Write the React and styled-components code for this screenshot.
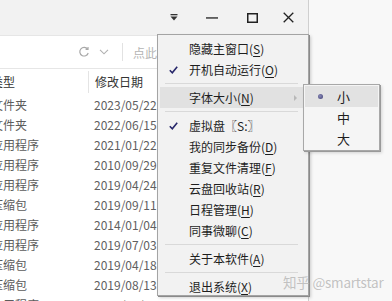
import React from 'react';
import styled, { createGlobalStyle } from 'styled-components';

const GlobalStyle = createGlobalStyle`
  html, body {
    margin: 0;
    padding: 0;
    background: #f8f8f8;
  }
  body {
    font-family: "Noto Sans CJK SC", "Liberation Sans", sans-serif;
  }
`;

const rows = [
  { type: '文件夹', date: '2023/05/22 09:12' },
  { type: '文件夹', date: '2022/06/15 17:40' },
  { type: '应用程序', date: '2021/01/22 11:05' },
  { type: '应用程序', date: '2010/09/29 08:30' },
  { type: '应用程序', date: '2019/04/24 14:22' },
  { type: '压缩包', date: '2019/09/11 10:01' },
  { type: '应用程序', date: '2014/01/04 16:45' },
  { type: '应用程序', date: '2019/07/03 09:58' },
  { type: '压缩包', date: '2019/04/18 13:36' },
  { type: '压缩包', date: '2019/08/13 15:20' },
  { type: '应用程序', date: '2022/01/20 10:58:00', size: '10.58 MB' },
];

const menuItems = [
  { label: '隐藏主窗口', key: 'S' },
  { label: '开机自动运行', key: 'O', checked: true },
  { sep: true },
  { label: '字体大小', key: 'N', sub: true, active: true },
  { sep: true },
  { label: '虚拟盘〖S:〗', checked: true },
  { label: '我的同步备份', key: 'D' },
  { label: '重复文件清理', key: 'F' },
  { label: '云盘回收站', key: 'R' },
  { label: '日程管理', key: 'H' },
  { label: '同事微聊', key: 'C' },
  { sep: true },
  { label: '关于本软件', key: 'A' },
  { sep: true },
  { label: '退出系统', key: 'X' },
];

const sizes = [
  { label: '小', selected: true },
  { label: '中' },
  { label: '大' },
];

const Check = () => (
  <svg width="9" height="8" viewBox="0 0 9 8">
    <path d="M0.8 4.2 L3.3 6.8 L8.2 0.8" fill="none" stroke="#27276a" strokeWidth="1.6" />
  </svg>
);

const App = () => (
  <>
    <GlobalStyle />
    <Page>
      <Window>
        <TitleBar>
          <TitleButton>
            <svg width="8" height="7" viewBox="0 0 8 7">
              <rect x="0.5" y="0" width="7" height="1.3" fill="#333" />
              <path d="M0.5 2.6 L7.5 2.6 L4 6.5 Z" fill="#333" />
            </svg>
          </TitleButton>
          <TitleButton>
            <svg width="12" height="2" viewBox="0 0 12 2">
              <rect x="0" y="0.3" width="12" height="1.3" fill="#222" />
            </svg>
          </TitleButton>
          <TitleButton $shift={2}>
            <svg width="11" height="10" viewBox="0 0 11 10">
              <rect x="0.75" y="0.75" width="9.5" height="8.5" fill="none" stroke="#222" strokeWidth="1.5" />
            </svg>
          </TitleButton>
          <TitleButton>
            <svg width="11" height="11" viewBox="0 0 11 11">
              <path d="M0.7 0.7 L10.3 10.3 M10.3 0.7 L0.7 10.3" stroke="#222" strokeWidth="1.3" />
            </svg>
          </TitleButton>
        </TitleBar>

        <Toolbar>
          <ToolIcon $left={78}>
            <svg width="12" height="12" viewBox="0 0 12 12">
              <path d="M9.6 3.2 A4.3 4.3 0 1 0 10.2 7" fill="none" stroke="#a8a8a8" strokeWidth="1.2" />
              <path d="M7.6 3.4 L10 3.4 L10 1" fill="none" stroke="#a8a8a8" strokeWidth="1.2" />
            </svg>
          </ToolIcon>
          <ToolIcon $left={8}>
            <svg width="10" height="6" viewBox="0 0 10 6">
              <path d="M1 0.8 L5 4.8 L9 0.8" fill="none" stroke="#b0b0b0" strokeWidth="1.1" />
            </svg>
          </ToolIcon>
          <ToolSeparator />
          <SearchHint>点此搜索文件</SearchHint>
        </Toolbar>

        <HeaderRow>
          <TypeCell $header>类型</TypeCell>
          <ColumnDivider />
          <DateCell $header>修改日期</DateCell>
        </HeaderRow>

        {rows.map((r, i) => (
          <FileRow key={i}>
            <TypeCell>{r.type}</TypeCell>
            <DateCell>{r.date}</DateCell>
            {r.size && <SizeCell>{r.size}</SizeCell>}
          </FileRow>
        ))}
      </Window>

      <Menu>
        {menuItems.map((m, i) =>
          m.sep ? (
            <MenuSeparator key={i} />
          ) : (
            <MenuItem key={i} $active={m.active}>
              <CheckCol>{m.checked && <Check />}</CheckCol>
              <span>
                {m.label}
                {m.key && (
                  <>
                    (<u>{m.key}</u>)
                  </>
                )}
              </span>
              {m.sub && <SubArrow />}
            </MenuItem>
          )
        )}
      </Menu>

      <SubMenu>
        {sizes.map((s) => (
          <SubItem key={s.label} $active={s.selected}>
            <BulletCol>{s.selected && <Bullet />}</BulletCol>
            {s.label}
          </SubItem>
        ))}
      </SubMenu>

      <Watermark>知乎 @smartstar</Watermark>
    </Page>
  </>
);

export default App;

const Page = styled.div`
  position: relative;
  width: 392px;
  height: 301px;
  overflow: hidden;
  background: #f8f8f8;
`;

const Window = styled.div`
  width: 309px;
  height: 301px;
  box-sizing: border-box;
  background: #fff;
  border-right: 1px solid #cfcfcf;
  display: flex;
  flex-direction: column;
  overflow: hidden;
`;

const TitleBar = styled.div`
  height: 35px;
  flex-shrink: 0;
  background: #f2f2f2;
  display: flex;
  align-items: center;
  justify-content: flex-end;
  padding-right: 1px;
`;

const TitleButton = styled.div`
  width: 38px;
  height: 35px;
  display: flex;
  align-items: center;
  justify-content: center;
  padding-left: ${(p) => (p.$shift || 0) * 2}px;
  box-sizing: border-box;
`;

const Toolbar = styled.div`
  height: 34px;
  flex-shrink: 0;
  box-sizing: border-box;
  border-top: 1px solid #e6e6e6;
  border-bottom: 1px solid #e6e6e6;
  display: flex;
  align-items: center;
`;

const ToolIcon = styled.div`
  margin-left: ${(p) => p.$left}px;
  width: 12px;
  display: flex;
  justify-content: center;
`;

const ToolSeparator = styled.div`
  width: 1px;
  height: 18px;
  margin-left: 12px;
  background: #e2e2e2;
`;

const SearchHint = styled.div`
  margin-left: 10px;
  font-size: 12px;
  color: #b4b4b4;
  white-space: nowrap;
`;

const HeaderRow = styled.div`
  height: 26px;
  flex-shrink: 0;
  display: flex;
  align-items: center;
  color: #333;
`;

const ColumnDivider = styled.div`
  width: 1px;
  height: 22px;
  background: #e4e4e4;
`;

const FileRow = styled.div`
  height: 20px;
  flex-shrink: 0;
  display: flex;
  align-items: center;
  color: #5e5e5e;
`;

const TypeCell = styled.div`
  width: 88px;
  flex-shrink: 0;
  font-size: 12px;
  line-height: 20px;
  white-space: nowrap;
  text-indent: -9px;
  color: ${(p) => (p.$header ? '#333' : '#5c5c5c')};
`;

const DateCell = styled.div`
  width: 138px;
  flex-shrink: 0;
  box-sizing: border-box;
  padding-left: 6px;
  font-size: 12px;
  line-height: 20px;
  white-space: nowrap;
  overflow: hidden;
  color: ${(p) => (p.$header ? '#333' : '#606060')};
`;

const SizeCell = styled.div`
  padding-left: 6px;
  font-size: 12px;
  line-height: 20px;
  white-space: nowrap;
  color: #606060;
`;

const Menu = styled.div`
  position: absolute;
  left: 157px;
  top: 34px;
  width: 152px;
  height: 262px;
  box-sizing: border-box;
  padding: 3px 0 0;
  background: #f2f2f2;
  border: 1px solid #a4a4a4;
  box-shadow: 1px 1px 0 #8a8a8a, 2px 2px 3px rgba(0, 0, 0, 0.18);
  font-size: 12px;
  color: #1e1e1e;
`;

const MenuItem = styled.div`
  height: 21px;
  margin: 0 2px;
  display: flex;
  align-items: center;
  white-space: nowrap;
  background: ${(p) => (p.$active ? '#e1e1e1' : 'transparent')};

  u {
    text-underline-offset: 2px;
  }
`;

const CheckCol = styled.div`
  width: 29px;
  flex-shrink: 0;
  display: flex;
  align-items: center;
  padding-left: 9px;
  box-sizing: border-box;
`;

const SubArrow = styled.div`
  margin-left: auto;
  margin-right: 9px;
  width: 0;
  height: 0;
  border-top: 3px solid transparent;
  border-bottom: 3px solid transparent;
  border-left: 3px solid #b8b8b8;
`;

const MenuSeparator = styled.div`
  height: 7px;
  margin: 0 10px 0 7px;
  display: flex;
  align-items: center;

  &::after {
    content: '';
    flex: 1;
    height: 1px;
    background: #d9d9d9;
  }
`;

const SubMenu = styled.div`
  position: absolute;
  left: 303px;
  top: 84px;
  width: 77px;
  height: 67px;
  box-sizing: border-box;
  padding-top: 1px;
  background: #f5f5f5;
  border: 1px solid #a8a8a8;
  box-shadow: 1px 1px 0 #9a9a9a, 2px 2px 3px rgba(0, 0, 0, 0.15);
  font-size: 13px;
  color: #1e1e1e;
`;

const SubItem = styled.div`
  height: 21px;
  margin: 0 1px;
  display: flex;
  align-items: center;
  background: ${(p) => (p.$active ? '#e2e2e2' : 'transparent')};
`;

const BulletCol = styled.div`
  width: 32px;
  flex-shrink: 0;
  display: flex;
  align-items: center;
  padding-left: 13px;
  box-sizing: border-box;
`;

const Bullet = styled.div`
  width: 5px;
  height: 5px;
  border-radius: 50%;
  background: radial-gradient(circle at 40% 40%, #8a8ab8, #3d3d72);
`;

const Watermark = styled.div`
  position: absolute;
  left: 283px;
  top: 273px;
  font-size: 13.5px;
  line-height: 18px;
  color: rgba(180, 180, 180, 0.8);
  white-space: nowrap;
  letter-spacing: -0.2px;
`;
